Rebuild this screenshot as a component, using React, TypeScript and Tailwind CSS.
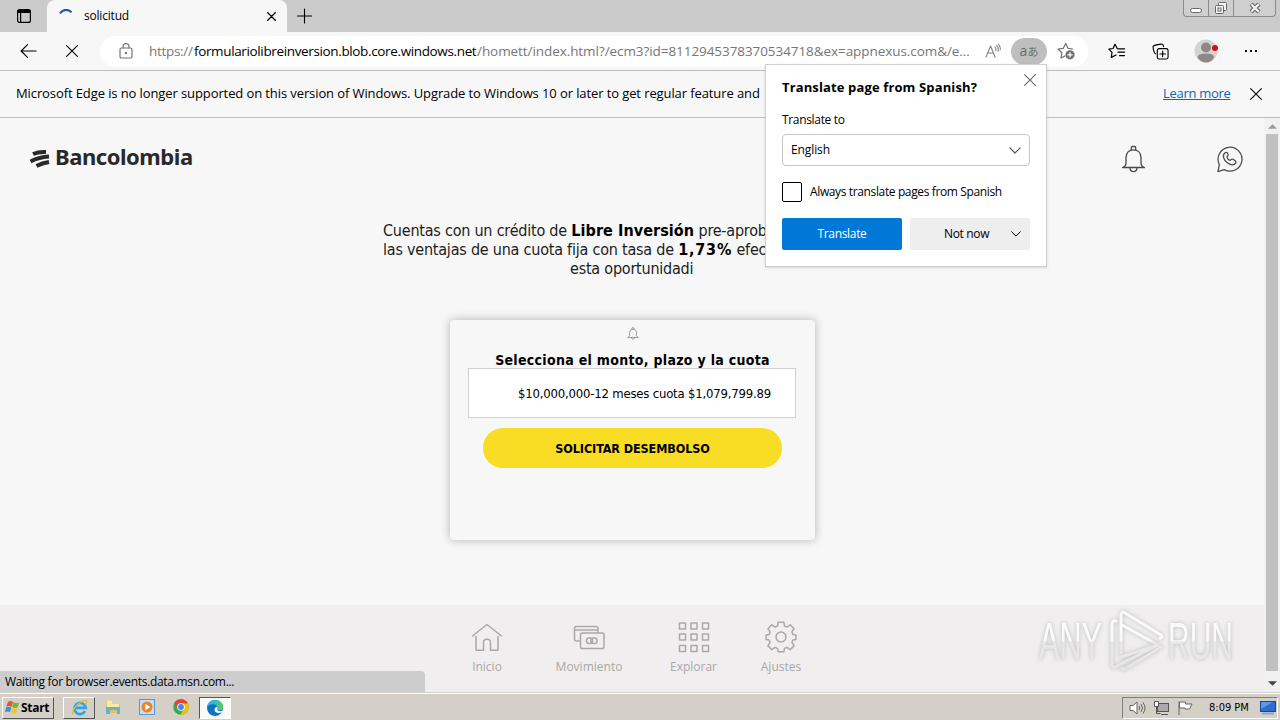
import type { ReactNode } from "react"

const stroke = { fill: "none", stroke: "currentColor", strokeLinecap: "round", strokeLinejoin: "round" } as const

function Cross({ className }: { className: string }) {
    return (
        <svg viewBox="0 0 12 12" className={className} {...stroke} strokeWidth={1.1}>
            <path d="M.6.6l10.8 10.8M11.4.6L.6 11.4" />
        </svg>
    )
}

function Chevron({ className }: { className: string }) {
    return (
        <svg viewBox="0 0 12 7" className={className} {...stroke} strokeWidth={1.2}>
            <path d="M.8.8L6 6l5.2-5.2" />
        </svg>
    )
}

function TabBar() {
    return (
        <div className="flex h-8 shrink-0 bg-[#cbcbcb]">
            <div className="flex w-[47px] items-center justify-center rounded-br-md">
                <svg viewBox="0 0 16 16" className="h-4 w-4" {...stroke} strokeWidth={1.2}>
                    <rect x="1.6" y="1.6" width="12.8" height="12.8" rx="2" />
                    <path d="M2.6 3.4h10.8" strokeWidth={3} />
                    <path d="M4.6 5v9" />
                </svg>
            </div>
            <div className="flex w-[240px] items-center rounded-t-lg bg-[#f7f7f7] pl-3">
                <svg viewBox="0 0 14 14" className="h-3.5 w-3.5" fill="none" stroke="#1b5c9c" strokeWidth={2}>
                    <path d="M.8 4.400Q6-2 12.600 3.200" />
                </svg>
                <span className="ml-[11px] w-[183px] text-[12px] tracking-[-0.2px]">solicitud</span>
                <svg viewBox="0 0 12 12" className="h-[9px] w-[9px]" {...stroke} strokeWidth={1.8}>
                    <path d="M1 1l10 10M11 1L1 11" />
                </svg>
            </div>
            <div className="flex w-9 items-center justify-center">
                <svg viewBox="0 0 16 16" className="h-4 w-4" {...stroke} strokeWidth={1.1}>
                    <path d="M7.500 1v14M.5 8h14" />
                </svg>
            </div>
            {/* window buttons */}
            <div className="ml-auto mr-1 flex h-[17px] w-[93px] rounded-b-[4px] border border-t-0 border-[#8b8b8b] bg-[#cfcfcf] text-[#666]">
                <div className="flex w-[25px] justify-center border-r border-[#8b8b8b] pt-[8px]">
                    <div className="h-[5px] w-3 rounded-sm border border-[#666] bg-white" />
                </div>
                <div className="flex w-[25px] justify-center border-r border-[#8b8b8b] pt-[1px]">
                    <svg viewBox="0 0 14 14" className="h-3.5 w-3.5" fill="#f4f4f4" stroke="currentColor">
                        <rect x="4.5" y="1.5" width="8" height="8" rx="1" />
                        <rect x="1.5" y="4.5" width="8" height="8" rx="1" />
                        <rect x="4" y="7" width="3" height="3" />
                    </svg>
                </div>
                <div className="flex flex-1 justify-center pt-[2px]">
                    <svg viewBox="0 0 14 12" className="h-3 w-3.5">
                        <path d="M3 2l8 8M11 2l-8 8" stroke="#666" strokeWidth={4.4} />
                        <path d="M3.3 2.3l7.4 7.4M10.7 2.3l-7.4 7.4" stroke="#f4f4f4" strokeWidth={2.3} />
                    </svg>
                </div>
            </div>
        </div>
    )
}

function Toolbar() {
    return (
        <div className="flex h-[39px] shrink-0 items-center border-b border-[#bdbdbd] bg-[#f7f7f7]">
            <svg viewBox="0 0 18 16" className="ml-5 h-4 w-[17px]" {...stroke} strokeWidth={1.2}>
                <path d="M17 8H1.2M8 1.2L1.2 8 8 14.8" />
            </svg>
            <Cross className="ml-[29px] h-3 w-3" />
            <div className="ml-[22px] flex h-[31px] w-[988px] items-center rounded-full bg-white pl-[19px]">
                <svg viewBox="0 0 14 16" className="h-4 w-3.5 text-[#777]" {...stroke} strokeWidth={1.2}>
                    <rect x="1" y="5" width="12" height="10" rx="1.6" />
                    <path d="M4 5V3.6a3 3 0 0 1 6 0V5" />
                    <circle cx="7" cy="10" r=".6" fill="currentColor" />
                </svg>
                <div className="ml-4 flex w-[836px] whitespace-nowrap text-[13.5px] text-[#767676]">
                    <span className="w-[45px] shrink-0 tracking-[-0.3px]">https://</span>
                    <span className="w-[283px] shrink-0 tracking-[-0.36px] text-black">formulariolibreinversion.blob.core.windows.net</span>
                    <span className="tracking-[-0.07px]">/homett/index.html?/ecm3?id=8112945378370534718&amp;ex=appnexus.com&amp;/e…</span>
                </div>
                <svg viewBox="0 0 16 16" className="h-4 w-4 text-[#808080]" {...stroke} strokeWidth={1.1}>
                    <path d="M1 14L5.600 3 10 14M2.700 10h5.800M10 4q1.400 1.600.8 3.600M11.600 2.400Q14 5 13 8.400M13.400 1q2.400 3 1.800 5.600" />
                </svg>
                <div className="ml-[10px] flex h-[27px] w-9 items-center justify-center rounded-full bg-[#bebebe] text-[#6d6d6d]">
                    <span className="text-[14px] leading-none">a</span>
                    <span className="text-[11px] leading-none">あ</span>
                </div>
                <svg viewBox="0 0 18 18" className="ml-[10px] h-[18px] w-[18px] text-[#707070]" {...stroke} strokeWidth={1.2}>
                    <path d="M15.500 7L11 6.300 8.700 1.500 6.300 6.300 1 7l3.900 3.800L4 16l4-2" />
                    <circle cx="13" cy="12.800" r="4.600" fill="currentColor" stroke="none" />
                    <path d="M13 10.600V15M10.800 12.800h4.400" stroke="white" />
                </svg>
            </div>
            <svg viewBox="0 0 18 16" className="ml-5 h-4 w-[18px]" {...stroke} strokeWidth={1.2}>
                <path d="M9.200 5.500L7 1.300 5 5.500.9 6.200 4 9.400 3.300 14.400 8 12M10 5.800h6.600M10 9.200h6.600M11.500 12.600h5" />
            </svg>
            <svg viewBox="0 0 18 18" className="ml-[26px] h-[17px] w-[17px]" {...stroke} strokeWidth={1.2}>
                <path d="M3.600 11.500C2 11 1 5 1.200 3.800 1.400 2.400 9.800.6 11 1.400c1 .4 1 1.400 1.200 2.400" />
                <rect x="5.600" y="6" width="11.400" height="11" rx="2" />
                <path d="M11.300 8.600v6M8.300 11.600h6" />
            </svg>
            <svg viewBox="0 0 24 24" className="ml-[25px] h-6 w-6">
                <circle cx="12" cy="12" r="11.500" fill="#d6d4d3" />
                <circle cx="12" cy="8.500" r="5" fill="#8e8886" />
                <path d="M3.500 18.500q0-4 8.500-4t8 4q-3 5-8 5t-8.500-5z" fill="#8e8886" />
                <circle cx="21" cy="9" r="3" fill="#d80a1c" />
            </svg>
            <div className="ml-[27px] flex gap-[3px]">
                <i className="h-0.5 w-0.5 bg-black" />
                <i className="h-0.5 w-0.5 bg-black" />
                <i className="h-0.5 w-0.5 bg-black" />
            </div>
        </div>
    )
}

function InfoBar() {
    return (
        <div className="flex h-[47px] shrink-0 items-center whitespace-nowrap border-b border-[#bdbdbd] bg-[#f7f7f7] pl-4 text-[13px]">
            <span className="w-[1147px] tracking-[-0.1px]">
                Microsoft Edge is no longer supported on this version of Windows. Upgrade to Windows 10 or later to get regular feature and
            </span>
            <a href="#" className="w-[67px] tracking-[-0.3px] text-[#1264ad] underline">
                Learn more
            </a>
            <Cross className="ml-5 h-3 w-3" />
        </div>
    )
}

function TranslatePopup() {
    return (
        <div className="absolute left-[765px] top-16 h-[203px] w-[282px] whitespace-nowrap border border-[#cfcfcf] bg-white px-4 text-[12px] tracking-[-0.33px] shadow-sm">
            <div className="flex justify-between">
                <h2 className="mt-[13px] text-[13px] font-bold leading-[18px] tracking-[0.13px]">Translate page from Spanish?</h2>
                <Cross className="-mr-[7px] mt-[9px] h-3 w-[14px] text-[#666]" />
            </div>
            <p className="mt-[15px] leading-[18px]">Translate to</p>
            <div className="mt-[5px] flex h-8 items-center justify-between rounded-sm border border-[#c4c4c4] px-2">
                <span className="tracking-[-0.1px]">English</span>
                <Chevron className="h-[7px] w-3 text-[#555]" />
            </div>
            <div className="mt-4 flex items-center gap-2">
                <div className="h-5 w-5 rounded-[2px] border border-black" />
                <span className="tracking-[-0.37px]">Always translate pages from Spanish</span>
            </div>
            <div className="mt-4 flex gap-2">
                <button className="h-8 w-[120px] rounded-[2px] bg-[#0078d7] text-white">Translate</button>
                <button className="flex h-8 w-[120px] items-center rounded-[2px] bg-[#eeeeee] pl-[34px]">
                    <span className="w-[67px] text-left">Not now</span>
                    <Chevron className="h-[6px] w-[10px]" />
                </button>
            </div>
        </div>
    )
}

function Bell({ className }: { className: string }) {
    return (
        <svg viewBox="0 0 24 28" className={className} {...stroke} strokeWidth={1.3}>
            <path d="M9.800 4.800V2.800Q9.800 1.500 11 1.500h2q1.200 0 1.200 1.300v2M1 22.500q3.500-1 3.500-4.500V12.500c0-4.800 3-7.700 7.500-7.700s7.500 2.900 7.500 7.700V18q0 3.500 3.500 4.500zM8.500 22.500c0 5.500 7 5.500 7 0" />
        </svg>
    )
}

function NavItem({ label, className, children }: { label: string; className: string; children: ReactNode }) {
    return (
        <div className={`flex flex-col items-center ${className}`}>
            <svg viewBox="0 0 32 32" className="h-8 w-8" {...stroke} strokeWidth={1.5}>
                {children}
            </svg>
            <span className="mt-[5px] text-[12px] font-medium leading-[18px]">{label}</span>
        </div>
    )
}

const gearTeeth =
    "M13.200 1.200h5.600l.7 3.800 2.500 1 3.200-2.200 3.900 3.900-2.200 3.200 1 2.500 3 .6v4.400l-3 .6-1 2.500 2.200 3.200-3.900 3.900-3.200-2.200-2.500 1-.7 3.400h-5.600l-.7-3.400-2.500-1-3.200 2.200-3.900-3.900 2.200-3.200-1-2.500-3-.6v-4.400l3-.6 1-2.500L2.900 7.700l3.900-3.900L10 6l2.500-1z"

function BottomNav() {
    return (
        <nav className="flex h-[87px] whitespace-nowrap bg-[#f0eeee] pl-[437px] pt-4 text-[#aaa8a8]">
            <NavItem label="Inicio" className="w-[100px]">
                <path d="M1.500 15L16 3.500 30.500 15M5 15.500V29.300h7.500v-8q0-3 3.500-3t3.500 3v8H27V15.500" />
            </NavItem>
            <NavItem label="Movimiento" className="w-[104px]">
                <path d="M7 20H3.500Q1.500 20 1.500 18V7.500Q1.500 5.500 3 5.500h20q2 0 2 2V11M2 9h23" />
                <rect x="7.500" y="12" width="23.500" height="15.500" rx="1.800" />
                <rect x="13.500" y="17" width="6" height="5.500" rx="2.500" />
                <rect x="18" y="17" width="6" height="5.500" rx="2.500" />
            </NavItem>
            <NavItem label="Explorar" className="w-[105px]">
                {[2, 13, 24.500].map((y) =>
                    [1.500, 13, 24.500].map((x) => <rect key={`${x}-${y}`} x={x} y={y} width="6" height="6" />)
                )}
            </NavItem>
            <NavItem label="Ajustes" className="w-[70px]">
                <path d={gearTeeth} />
                <circle cx="16" cy="16" r="5" />
            </NavItem>
        </nav>
    )
}

function Watermark() {
    return (
        <svg viewBox="0 0 230 75" className="absolute left-[1030px] top-[603px] h-[75px] w-[230px] drop-shadow-[0_0_2px_#bbb]">
            <defs>
                <linearGradient id="mark" gradientUnits="userSpaceOnUse" x1="0" y1="0" x2="0" y2="75">
                    <stop offset=".5" stopColor="#fafafa" />
                    <stop offset=".52" stopColor="#e9e8e8" />
                    <stop offset="1" stopColor="#e6e5e5" />
                </linearGradient>
            </defs>
            <g fill="url(#mark)" className="font-['Liberation_Sans_Narrow','Liberation_Sans',sans-serif] text-[51px] tracking-normal">
                <text x="9" y="56" textLength="63" lengthAdjust="spacingAndGlyphs">ANY</text>
                <text x="138" y="56" textLength="65" lengthAdjust="spacingAndGlyphs">RUN</text>
            </g>
            <g fill="none" stroke="url(#mark)" strokeWidth={3} strokeLinejoin="round" strokeLinecap="round">
                <path d="M82 60V22q0-5 4-4M91 50V12q0-4 4-2l36 22q2 2-1 3M92 22l36 20-43 22q-3 1-3-3M91 54l37-12M131 44L95 66q-2 1-3-1" />
            </g>
        </svg>
    )
}

function Page() {
    return (
        <div className="flex h-[574px] shrink-0">
            <div className="flex flex-1 flex-col bg-[#f7f7f7]">
                <header className="flex h-[100px] items-start pl-[30px] pt-[26px]">
                    <svg viewBox="0 0 20 20" className="mt-1 h-5 w-5" fill="none" stroke="#292929" strokeWidth={4}>
                        <path d="M3 6Q9 3.500 16 4M.5 13.500Q9 9 19 8.500M6.500 18Q12 15 19 14" />
                    </svg>
                    <span className="-mt-px ml-[5px] w-[1066px] font-['Noto_Sans',sans-serif] text-[22px] font-bold leading-[26px] tracking-[-0.45px] text-[#292929]">
                        Bancolombia
                    </span>
                    <Bell className="mt-px h-7 w-[25px] text-[#4a4a4a]" />
                    <svg viewBox="0 0 28 28" className="ml-[70px] mt-px h-7 w-[27px] text-[#4a4a4a]" {...stroke} strokeWidth={1.3}>
                        <path d="M2 27l1.500-7.200A12.400 12.400 0 1 1 8.500 25z" />
                        <path d="M9.500 7.500C6 10 8 15 11.500 17.700c3.500 3 7.500 3.300 9 .3.800-1.800-.3-2.300-2.800-3.800-1.700-.8-1.800.8-3 1.300-1.700-.6-3-2.200-3.400-3.800.8-.7 1.800-1.200 1.300-2.300-.9-2-1.700-2.900-3.100-1.900z" />
                    </svg>
                </header>
                <div className="mt-[3px] whitespace-nowrap pl-[383px] font-['DejaVu_Sans_Condensed','DejaVu_Sans',sans-serif] text-[16px] leading-[19px] tracking-[-0.22px] text-[#1c1c1c] font-stretch-condensed">
                    <p className="w-[420px]">
                        Cuentas con un crédito de <b className="tracking-[0.07px] text-black">Libre Inversión</b> pre-aprob
                    </p>
                    <p className="w-[420px]">
                        las ventajas de una cuota fija con tasa de <b className="tracking-[0.8px] text-black">1,73%</b> efec
                    </p>
                    <p className="pl-[187px]">esta oportunidadi</p>
                </div>
                <section className="ml-[450px] mt-[42px] flex h-[220px] w-[365px] flex-col items-center whitespace-nowrap rounded bg-[#f7f7f7] pt-[7px] font-['DejaVu_Sans_Condensed','DejaVu_Sans',sans-serif] font-stretch-condensed shadow-[0_0_10px_rgba(0,0,0,0.28)]">
                    <Bell className="h-[13px] w-3 text-[#666]" />
                    <h1 className="mt-[11px] h-[17px] text-[14px] font-bold leading-[18px] tracking-[0.3px]">Selecciona el monto, plazo y la cuota</h1>
                    <div className="mr-px flex h-[50px] w-[328px] items-center border border-[#d0d0d0] bg-white pl-[49px] pt-px text-[13px] tracking-[-0.2px]">
                        $10,000,000-12 meses cuota $1,079,799.89
                    </div>
                    <button className="mt-[10px] h-10 w-[299px] rounded-full bg-[#f9dc24] pt-0.5 text-[12.5px] font-bold tracking-[-0.1px]">
                        SOLICITAR DESEMBOLSO
                    </button>
                </section>
                <div className="mt-auto">
                    <BottomNav />
                </div>
            </div>
            <div className="flex w-4 flex-col items-center bg-[#f1f1f1]">
                <svg viewBox="0 0 10 5" className="mt-[6px] h-[5px] w-[9px]">
                    <path d="M0 5l5-5 5 5z" fill="#999" />
                </svg>
                <div className="mt-[5px] h-[537px] w-3 bg-[#c1c1c1]" />
                <svg viewBox="0 0 10 5" className="mt-[10px] h-[5px] w-[9px]">
                    <path d="M0 0l5 5 5-5z" fill="#444" />
                </svg>
            </div>
        </div>
    )
}

function EdgeIcon() {
    return (
        <svg viewBox="0 0 16 16" className="h-4 w-4">
            <circle cx="8" cy="8" r="8" fill="#1272c4" />
            <path d="M0 7.500C.8 2.500 4 0 8 0c5 0 8 3.500 8 7 0 2-1.500 3.300-3.300 3.300-1.500 0-2.500-.5-2.500-1.200C11 6 8 4 5 4.300 3 4.500 1 5.500 0 7.500z" fill="#2fb6d8" />
            <path d="M9 .1c4.500.4 7 3.700 7 6.900 0 2-1.500 3.300-3.300 3.300-1.500 0-2.500-.5-2.500-1.200C11.500 6 11 3 9 .1z" fill="#52ca6c" />
            <path d="M10.300 8.500c-.8 1.500 1 3.500 5.200 2.300l-.7 1.400c-3 1.600-6.800.6-7.200-2C7.400 8 9 6.500 10.300 7z" fill="white" />
        </svg>
    )
}

function Taskbar() {
    return (
        <div className="flex h-7 shrink-0 items-center border-t border-[#d6d2cb] bg-[#d4cfc7] shadow-[inset_0_1px_0_white]">
            <button className="ml-[2px] mt-[2px] flex h-[22px] w-[52px] items-center border border-white border-b-[#555] border-r-[#555] pl-[2px] text-[12px] font-bold">
                <svg viewBox="0 0 16 16" className="h-[15px] w-[15px]">
                    <path d="M3 2q3-2 5.500 0L7 7.200Q4.500 5.600 1.500 7z" fill="#e8542c" />
                    <path d="M9 2.500q3 1.500 6 .2L13.500 8q-3 1.200-6-.5z" fill="#77b52c" />
                    <path d="M1.200 8q3-1.500 5.500 0L5.300 13Q3 11.500 0 13z" fill="#3c8ee0" />
                    <path d="M7.300 8.500q3 1.500 6 .2L12 14q-3 1-6-.7z" fill="#f7c52b" />
                </svg>
                <span className="ml-px tracking-[-0.3px]">Start</span>
            </button>
            <div className="ml-[9px] mt-[2px] flex h-[22px] w-8 items-center justify-center border border-white border-b-[#555] border-r-[#555]">
                <svg viewBox="0 0 16 16" className="h-[17px] w-[17px]" fill="none">
                    <path d="M13.200 11.500A5.300 5.300 0 1 1 13.800 8.300H4.500" stroke="#2fa4e8" strokeWidth={2.500} />
                    <path d="M2 14.500C-1 12 8 1 14 1.500q2 1-.5 4" stroke="#e8b92e" strokeWidth={1.200} />
                </svg>
            </div>
            <svg viewBox="0 0 16 16" className="ml-[10px] h-4 w-4">
                <path d="M1 3h5l1 2h8v9H1z" fill="#e7c35b" />
                <path d="M2 1.500h5V5h7v5H2z" fill="#fbeaa0" />
                <path d="M1 8h14v7h-3v-4H5v4H1z" fill="#62b2d5" />
            </svg>
            <svg viewBox="0 0 16 16" className="ml-[18px] h-4 w-4">
                <rect x=".5" y=".5" width="15" height="15" fill="#c4dff5" stroke="#5c98c8" />
                <circle cx="8" cy="8" r="5.500" fill="#ef8420" />
                <path d="M6.300 4.800l5 3.200-5 3.200z" fill="white" />
            </svg>
            <svg viewBox="0 0 16 16" className="ml-[18px] h-4 w-4">
                <circle cx="8" cy="8" r="7.800" fill="#34a853" />
                <path d="M1.200 4A7.800 7.800 0 0 1 14.900 4.500H8L5 10z" fill="#ea4335" />
                <path d="M14.900 4.500A7.800 7.800 0 0 1 7.500 15.800L11 9.500 8 4.500z" fill="#fbbc05" />
                <circle cx="8" cy="8" r="3.800" fill="white" />
                <circle cx="8" cy="8" r="2.900" fill="#4285f4" />
            </svg>
            <div className="ml-[10px] mt-[2px] flex h-[22px] w-8 items-center justify-center border border-white border-l-[#555] border-t-[#555] bg-[#fafafa]">
                <EdgeIcon />
            </div>
            <div className="ml-auto mr-[2px] mt-[2px] flex h-[22px] w-[156px] items-center whitespace-nowrap border border-white border-l-[#808080] border-t-[#808080] pl-[6px] font-['DejaVu_Sans_Condensed','DejaVu_Sans',sans-serif] text-[11px] font-stretch-condensed">
                <svg viewBox="0 0 17 14" className="h-3.5 w-[17px]" fill="none" stroke="#666">
                    <path d="M1 4.500h3L8 1v12L4 9.500H1z" fill="white" />
                    <path d="M10 5q1.500 2 0 4M12 3q3 4 0 8M14 1.500q4 5.500 0 11" />
                </svg>
                <svg viewBox="0 0 17 16" className="ml-[7px] h-4 w-[17px]" fill="white" stroke="#555">
                    <rect x="4.500" y="3.500" width="11" height="8" fill="#aaa" />
                    <path d="M8 14.500h7M3.500 6.500v7h4" fill="none" />
                    <path d="M1.500 1.500h4v5h-4z" />
                </svg>
                <svg viewBox="0 0 17 16" className="ml-[7px] h-4 w-[17px]" fill="white" stroke="#666">
                    <path d="M2 15V1.500M2.500 2h6v2h6.500l-2.500 5H8V8H2.500z" />
                </svg>
                <span className="ml-[15px] w-[42px] pt-px">8:09 PM</span>
                <svg viewBox="0 0 16 14" className="ml-[9px] h-3.5 w-4">
                    <rect x=".5" y=".5" width="15" height="10" fill="#2e6ed0" stroke="#17478e" />
                    <path d="M1 1h12L1 8z" fill="#5c99e8" />
                    <path d="M2 12.500h12" stroke="#8aa4c4" strokeWidth={2} />
                </svg>
            </div>
        </div>
    )
}

export default function App() {
    return (
        <div className="relative flex h-[720px] w-[1280px] flex-col overflow-hidden bg-[#f7f7f7] font-['Open_Sans','Noto_Sans_CJK_JP',sans-serif] text-black">
            <TabBar />
            <Toolbar />
            <InfoBar />
            <Page />
            <Taskbar />
            <Watermark />
            <div className="absolute left-0 top-[671px] h-[21px] w-[425px] rounded-tr bg-[#cdcdcd] pl-[5px] text-[12px] leading-[21px] tracking-[-0.32px]">
                Waiting for browser.events.data.msn.com...
            </div>
            <TranslatePopup />
        </div>
    )
}
